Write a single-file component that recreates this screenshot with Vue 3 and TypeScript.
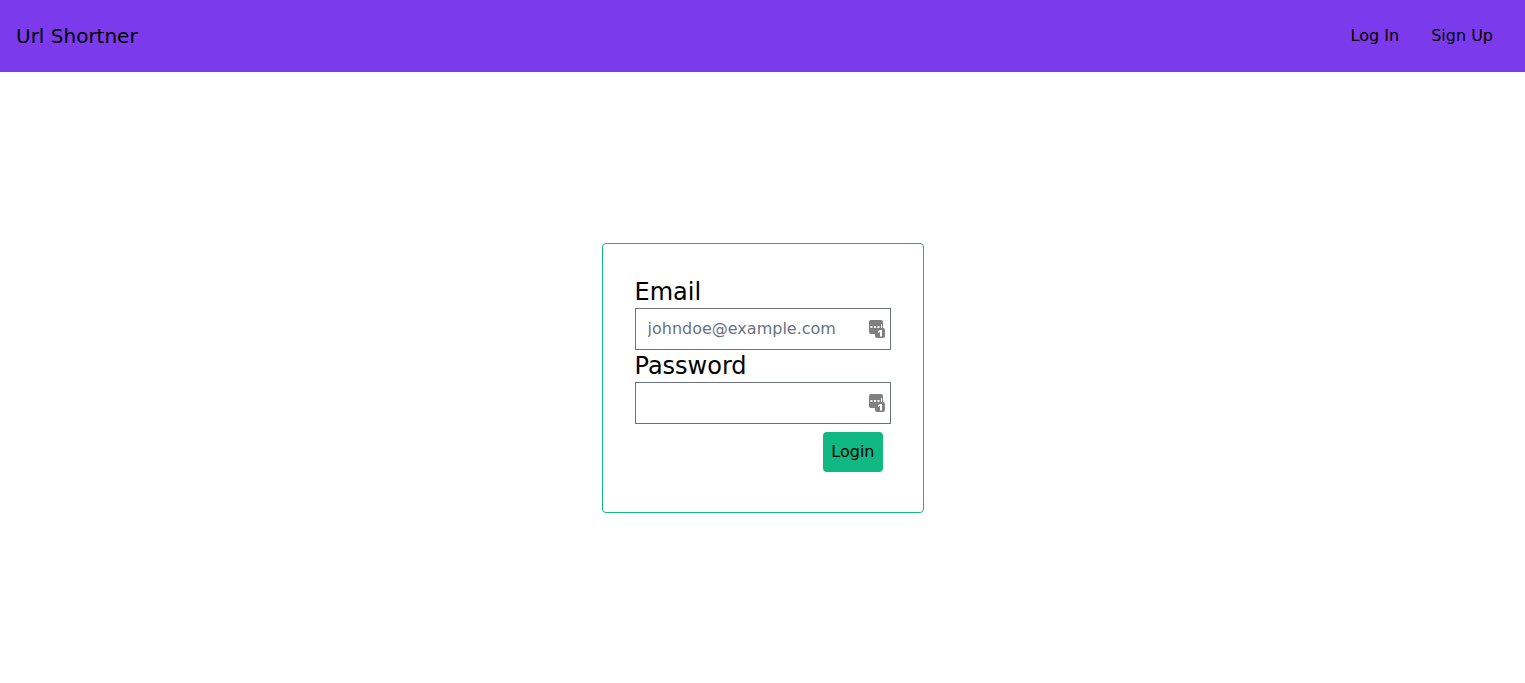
<script setup lang="ts">
import { ref } from 'vue'

interface Field {
  id: string
  label: string
  type: string
  placeholder: string
}

const fields: Field[] = [
  { id: 'email', label: 'Email', type: 'email', placeholder: 'johndoe@example.com' },
  { id: 'password', label: 'Password', type: 'password', placeholder: '' },
]

const values = ref<Record<string, string>>({ email: '', password: '' })
</script>

<template>
  <div class="page">
    <header class="navbar">
      <a class="brand" href="#">Url Shortner</a>
      <nav class="links">
        <a class="link" href="#login">Log In</a>
        <a class="link" href="#signup">Sign Up</a>
      </nav>
    </header>
    <main class="content">
      <form class="card" @submit.prevent>
        <template v-for="field in fields" :key="field.id">
          <label class="label" :for="field.id">{{ field.label }}</label>
          <div class="control">
            <input
              :id="field.id"
              v-model="values[field.id]"
              class="input"
              :type="field.type"
              :placeholder="field.placeholder"
            />
            <svg class="key-icon" viewBox="0 0 16 18" aria-hidden="true">
              <path
                fill="#808080"
                d="M2 0h10a2 2 0 0 1 2 2v6a2 2 0 0 1 2 2v6a2 2 0 0 1-2 2H8a2 2 0 0 1-2-2v-2H2a2 2 0 0 1-2-2V2a2 2 0 0 1 2-2z"
              />
              <path
                fill="#fff"
                d="M1.500 6h2v2h-2zM5 6h2v2H5zM8.500 6h2v2h-2zM12 4h1v4h-1z"
              />
              <path fill="#fff" d="M11 10h2v6.500h-2V12l-2 .8v-1.600z" />
            </svg>
          </div>
        </template>
        <button class="submit" type="submit">Login</button>
      </form>
    </main>
  </div>
</template>

<style>
body {
  margin: 0;
  background: #fff;
}
</style>

<style scoped>
.page {
  display: flex;
  flex-direction: column;
  min-height: 100vh;
  color: #000;
  font-family: "DejaVu Sans", sans-serif;
  font-size: 16px;
  line-height: 24px;
}

.navbar {
  display: flex;
  align-items: center;
  justify-content: space-between;
  padding: 16px;
  background: #7c3aed;
}

.brand,
.link {
  color: inherit;
  text-decoration: none;
}

.brand {
  font-size: 20px;
  line-height: 28px;
}

.links {
  display: flex;
}

.link {
  padding: 8px 16px;
}

.content {
  display: flex;
  flex: 1;
  align-items: center;
  justify-content: center;
}

.card {
  display: flex;
  flex-direction: column;
  padding: 32px;
  border: 1px solid #10b981;
  border-radius: 4px;
}

.label {
  font-size: 24px;
  line-height: 32px;
}

.control {
  position: relative;
  width: 256px;
}

.input {
  display: block;
  box-sizing: border-box;
  width: 100%;
  height: 42px;
  margin: 0;
  padding: 8px 12px;
  border: 1px solid #6b7280;
  border-radius: 0;
  background: #fff;
  color: inherit;
  font: inherit;
}

.input::placeholder {
  color: #6b7280;
  opacity: 1;
}

.key-icon {
  position: absolute;
  top: 12px;
  right: 6px;
  width: 16px;
  height: 18px;
}

.submit {
  align-self: flex-end;
  margin: 8px;
  padding: 8px;
  border: 0;
  border-radius: 4px;
  background: #10b981;
  color: inherit;
  font: inherit;
  cursor: pointer;
}
</style>
